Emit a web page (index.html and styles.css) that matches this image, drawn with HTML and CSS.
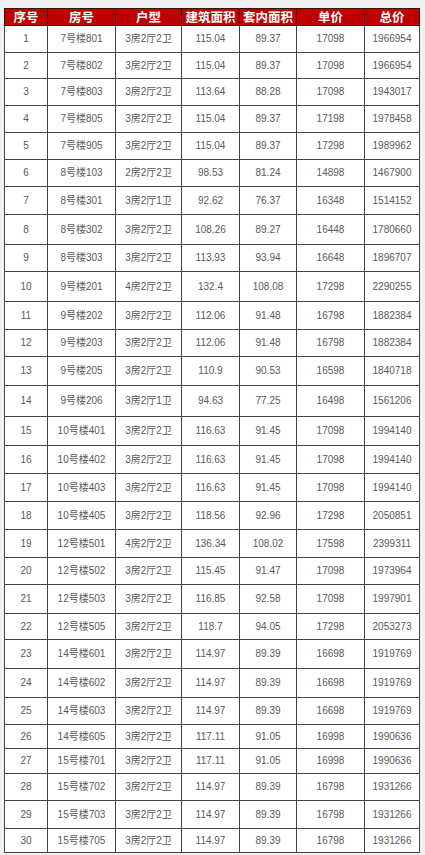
FILE: index.html
```html
<!DOCTYPE html>
<html lang="zh-CN">
<head>
<meta charset="utf-8">
<title>房源价格表</title>
<link rel="stylesheet" href="styles.css">
</head>
<body>
<table class="price-table">
  <colgroup>
    <col class="c-no"><col class="c-room"><col class="c-type"><col class="c-area"><col class="c-inner"><col class="c-unit"><col class="c-total">
  </colgroup>
  <thead>
    <tr class="head"><th>序号</th><th>房号</th><th class="lt">户型</th><th>建筑面积</th><th>套内面积</th><th>单价</th><th class="lt">总价</th></tr>
  </thead>
  <tbody>
    <tr class="h27"><td>1</td><td>7号楼801</td><td class="lt">3房2厅2卫</td><td>115.04</td><td>89.37</td><td>17098</td><td class="lt">1966954</td></tr>
    <tr class="h26"><td>2</td><td>7号楼802</td><td class="lt">3房2厅2卫</td><td>115.04</td><td>89.37</td><td>17098</td><td class="lt">1966954</td></tr>
    <tr class="h27"><td>3</td><td>7号楼803</td><td class="lt">3房2厅2卫</td><td>113.64</td><td>88.28</td><td>17098</td><td class="lt">1943017</td></tr>
    <tr class="h27"><td>4</td><td>7号楼805</td><td class="lt">3房2厅2卫</td><td>115.04</td><td>89.37</td><td>17198</td><td class="lt">1978458</td></tr>
    <tr class="h27"><td>5</td><td>7号楼905</td><td class="lt">3房2厅2卫</td><td>115.04</td><td>89.37</td><td>17298</td><td class="lt">1989962</td></tr>
    <tr class="h27"><td>6</td><td>8号楼103</td><td class="lt">2房2厅2卫</td><td>98.53</td><td>81.24</td><td>14898</td><td class="lt">1467900</td></tr>
    <tr class="h28"><td>7</td><td>8号楼301</td><td class="lt">3房2厅1卫</td><td>92.62</td><td>76.37</td><td>16348</td><td class="lt">1514152</td></tr>
    <tr class="h30"><td>8</td><td>8号楼302</td><td class="lt">3房2厅2卫</td><td>108.26</td><td>89.27</td><td>16448</td><td class="lt">1780660</td></tr>
    <tr class="h27"><td>9</td><td>8号楼303</td><td class="lt">3房2厅2卫</td><td>113.93</td><td>93.94</td><td>16648</td><td class="lt">1896707</td></tr>
    <tr class="h30"><td>10</td><td>9号楼201</td><td class="lt">4房2厅2卫</td><td>132.4</td><td>108.08</td><td>17298</td><td class="lt">2290255</td></tr>
    <tr class="h28"><td>11</td><td>9号楼202</td><td class="lt">3房2厅2卫</td><td>112.06</td><td>91.48</td><td>16798</td><td class="lt">1882384</td></tr>
    <tr class="h27"><td>12</td><td>9号楼203</td><td class="lt">3房2厅2卫</td><td>112.06</td><td>91.48</td><td>16798</td><td class="lt">1882384</td></tr>
    <tr class="h29"><td>13</td><td>9号楼205</td><td class="lt">3房2厅2卫</td><td>110.9</td><td>90.53</td><td>16598</td><td class="lt">1840718</td></tr>
    <tr class="h31"><td>14</td><td>9号楼206</td><td class="lt">3房2厅1卫</td><td>94.63</td><td>77.25</td><td>16498</td><td class="lt">1561206</td></tr>
    <tr class="h29"><td>15</td><td>10号楼401</td><td class="lt">3房2厅2卫</td><td>116.63</td><td>91.45</td><td>17098</td><td class="lt">1994140</td></tr>
    <tr class="h28"><td>16</td><td>10号楼402</td><td class="lt">3房2厅2卫</td><td>116.63</td><td>91.45</td><td>17098</td><td class="lt">1994140</td></tr>
    <tr class="h28"><td>17</td><td>10号楼403</td><td class="lt">3房2厅2卫</td><td>116.63</td><td>91.45</td><td>17098</td><td class="lt">1994140</td></tr>
    <tr class="h28"><td>18</td><td>10号楼405</td><td class="lt">3房2厅2卫</td><td>118.56</td><td>92.96</td><td>17298</td><td class="lt">2050851</td></tr>
    <tr class="h28"><td>19</td><td>12号楼501</td><td class="lt">4房2厅2卫</td><td>136.34</td><td>108.02</td><td>17598</td><td class="lt">2399311</td></tr>
    <tr class="h27"><td>20</td><td>12号楼502</td><td class="lt">3房2厅2卫</td><td>115.45</td><td>91.47</td><td>17098</td><td class="lt">1973964</td></tr>
    <tr class="h29"><td>21</td><td>12号楼503</td><td class="lt">3房2厅2卫</td><td>116.85</td><td>92.58</td><td>17098</td><td class="lt">1997901</td></tr>
    <tr class="h26"><td>22</td><td>12号楼505</td><td class="lt">3房2厅2卫</td><td>118.7</td><td>94.05</td><td>17298</td><td class="lt">2053273</td></tr>
    <tr class="h29"><td>23</td><td>14号楼601</td><td class="lt">3房2厅2卫</td><td>114.97</td><td>89.39</td><td>16698</td><td class="lt">1919769</td></tr>
    <tr class="h29"><td>24</td><td>14号楼602</td><td class="lt">3房2厅2卫</td><td>114.97</td><td>89.39</td><td>16698</td><td class="lt">1919769</td></tr>
    <tr class="h27"><td>25</td><td>14号楼603</td><td class="lt">3房2厅2卫</td><td>114.97</td><td>89.39</td><td>16698</td><td class="lt">1919769</td></tr>
    <tr class="h24"><td>26</td><td>14号楼605</td><td class="lt">3房2厅2卫</td><td>117.11</td><td>91.05</td><td>16998</td><td class="lt">1990636</td></tr>
    <tr class="h25"><td>27</td><td>15号楼701</td><td class="lt">3房2厅2卫</td><td>117.11</td><td>91.05</td><td>16998</td><td class="lt">1990636</td></tr>
    <tr class="h27"><td>28</td><td>15号楼702</td><td class="lt">3房2厅2卫</td><td>114.97</td><td>89.39</td><td>16798</td><td class="lt">1931266</td></tr>
    <tr class="h28"><td>29</td><td>15号楼703</td><td class="lt">3房2厅2卫</td><td>114.97</td><td>89.39</td><td>16798</td><td class="lt">1931266</td></tr>
    <tr class="h24"><td>30</td><td>15号楼705</td><td class="lt">3房2厅2卫</td><td>114.97</td><td>89.39</td><td>16798</td><td class="lt">1931266</td></tr>
  </tbody>
</table>
</body>
</html>
```
FILE: styles.css
```css
html, body {
  margin: 0;
  padding: 0;
  background: #f0f0f0;
}

body {
  padding: 8px 0 0 4px;
}

.price-table {
  border-collapse: collapse;
  table-layout: fixed;
  width: 415px;
  background: #ffffff;
  border: 1px solid #3a3a3a;
  font-family: "Liberation Sans", "Noto Sans CJK SC", sans-serif;
}

.c-no { width: 43px; }
.c-room { width: 68px; }
.c-type { width: 66px; }
.c-area { width: 58px; }
.c-inner { width: 57px; }
.c-unit { width: 68px; }
.c-total { width: 55px; }

.price-table th,
.price-table td {
  padding: 0;
  text-align: center;
  vertical-align: middle;
  white-space: nowrap;
  overflow: hidden;
}

.price-table th {
  height: 16px;
  background: #c00000;
  color: #ffffff;
  font-family: "Noto Sans CJK SC", sans-serif;
  font-weight: 700;
  font-size: 12.5px;
  line-height: 14px;
  border: 1px solid #3a1010;
}

.price-table td {
  font-size: 10px;
  line-height: 12px;
  color: #5a5a5a;
  border: 1px solid #444444;
}

.price-table td.lt {
  border-left-color: #bdbdbd;
}

.h24 td { height: 23px; }
.h25 td { height: 24px; }
.h26 td { height: 25px; }
.h27 td { height: 26px; }
.h28 td { height: 27px; }
.h29 td { height: 28px; }
.h30 td { height: 29px; }
.h31 td { height: 30px; }
```
